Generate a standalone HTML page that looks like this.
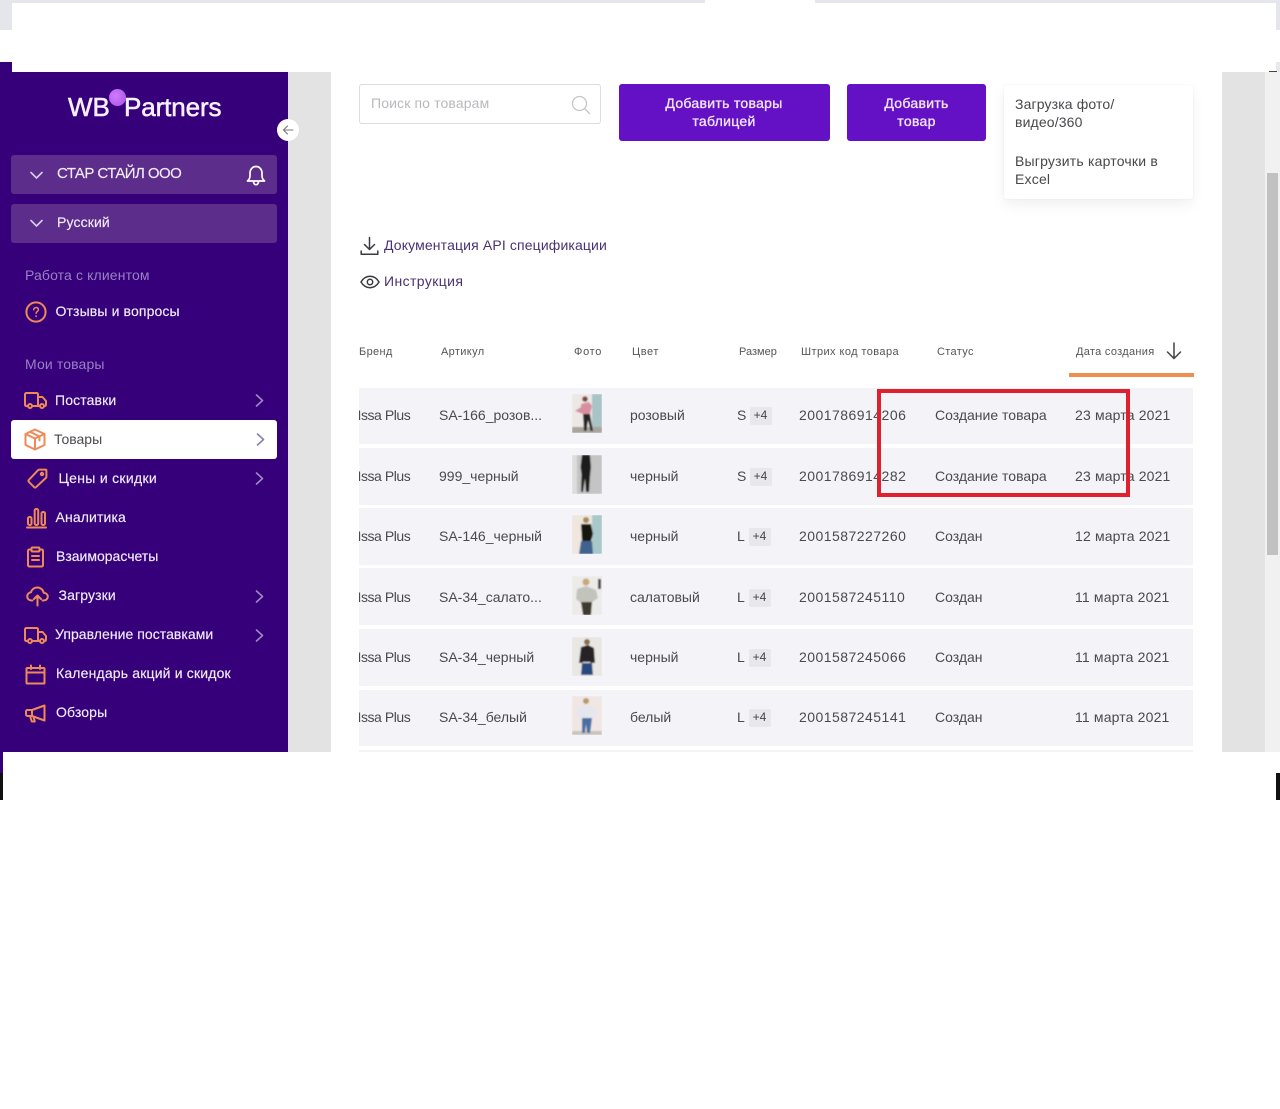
<!DOCTYPE html>
<html lang="ru"><head><meta charset="utf-8"><title>WB Partners</title>
<style>
html,body{margin:0;padding:0;background:#fff}
body{position:relative;width:1280px;height:1109px;overflow:hidden;font-family:"Liberation Sans","DejaVu Sans",sans-serif;color:#444;filter:blur(.3px)}
.b{position:absolute}
.t{position:absolute;white-space:nowrap;line-height:20px;font-size:14px}
.m{color:#f1ecf8;font-size:14px;letter-spacing:.13px;transform:translateY(-1px);-webkit-text-stroke:.15px #f1ecf8}
.s{color:#9a80c4;font-size:14px;letter-spacing:.13px;transform:translateY(-1px)}
.h{font-size:11px;color:#555;letter-spacing:.35px}
.c{font-size:14px;color:#4a4a4e}
.i{letter-spacing:-.45px}
.n{letter-spacing:.47px}
.d{letter-spacing:.16px}
.row{position:absolute;left:359px;width:834px;background:#f3f3f8}
.bd{position:absolute;width:22px;height:18px;background:#e8e8ec;border-radius:2px;font-size:12px;line-height:17px;text-align:center;color:#444}
.ph{position:absolute;left:572px;width:30px;height:39px}
.ic{position:absolute;fill:none;stroke:#ee8a5a;stroke-width:2;stroke-linecap:round;stroke-linejoin:round}
.ch{position:absolute;fill:none;stroke:#9c8cc0;stroke-width:1.6;stroke-linecap:round;stroke-linejoin:round}
.btn{position:absolute;top:84px;height:57px;background:#6410c4;border-radius:3px;color:#f0e4fb;font-size:14px;line-height:18px;text-align:center;letter-spacing:.3px;-webkit-text-stroke:.35px #f0e4fb}
</style></head><body>

<!-- screen top strip -->
<div class="b" style="left:0;top:0;width:705px;height:3px;background:#e4e6ec"></div>
<div class="b" style="left:815px;top:0;width:465px;height:3px;background:#e4e6ec"></div>
<div class="b" style="left:0;top:3px;width:12px;height:27px;background:#e4e6ec"></div>
<div class="b" style="left:1276px;top:3px;width:4px;height:27px;background:#e4e6ec"></div>
<div class="b" style="left:0;top:62px;width:12px;height:10px;background:#35007a"></div>
<div class="b" style="left:1276px;top:62px;width:4px;height:10px;background:#e8e8ec"></div>

<!-- backgrounds -->
<div class="b" style="left:288px;top:72px;width:43px;height:680px;background:#e3e3e3"></div>
<div class="b" style="left:1222px;top:72px;width:43px;height:680px;background:#e3e3e3"></div>
<div class="b" style="left:1265px;top:72px;width:15px;height:680px;background:#f1f1f1"></div>
<div class="b" style="left:1267px;top:173px;width:11px;height:382px;background:#c1c1c1"></div>
<div class="b" style="left:1269px;top:71px;width:8px;height:1px;background:#444"></div>

<!-- sidebar -->
<div class="b" style="left:0;top:72px;width:288px;height:680px;background:#35007a"></div>
<div class="t" style="left:68px;top:92px;font-size:26px;line-height:30px;color:#f6f0fb;-webkit-text-stroke:.55px #f6f0fb">WB</div>
<div class="t" style="left:124px;top:92px;font-size:26px;line-height:30px;color:#f6f0fb;letter-spacing:-.1px;-webkit-text-stroke:.55px #f6f0fb">Partners</div>
<div class="b" style="left:109px;top:89px;width:17px;height:17px;border-radius:50%;background:radial-gradient(circle at 40% 40%,#cf7dfb,#a94fe8)"></div>
<div class="b" style="left:277px;top:119px;width:22px;height:22px;border-radius:50%;background:#fff"></div>
<svg class="b" style="left:282px;top:124px" width="12" height="12" viewBox="0 0 12 12" fill="none" stroke="#777" stroke-width="1.1" stroke-linecap="round" stroke-linejoin="round"><path d="M11 6H1.5M5.5 2 1.5 6l4 4"/></svg>

<div class="b" style="left:11px;top:155px;width:266px;height:39px;background:#5c2d8a;border-radius:3px"></div>
<div class="b" style="left:11px;top:204px;width:266px;height:38.5px;background:#5c2d8a;border-radius:3px"></div>
<svg class="b" style="left:30px;top:171px;fill:none;stroke:#d8cce8;stroke-width:1.6;stroke-linecap:round;stroke-linejoin:round" width="13" height="9" viewBox="0 0 13 9"><path d="M1 1.5 6.5 7 12 1.5"/></svg>
<svg class="b" style="left:30px;top:219px;fill:none;stroke:#d8cce8;stroke-width:1.6;stroke-linecap:round;stroke-linejoin:round" width="13" height="9" viewBox="0 0 13 9"><path d="M1 1.5 6.5 7 12 1.5"/></svg>
<div class="t m" style="left:57px;top:165px;font-size:15px;letter-spacing:-.55px">СТАР СТАЙЛ ООО</div>
<div class="t m" style="left:57px;top:213px">Русский</div>
<svg class="b" style="left:245px;top:164px;fill:none;stroke:#fff;stroke-width:1.7;stroke-linecap:round;stroke-linejoin:round" width="22" height="22" viewBox="0 0 22 22"><path d="M2.5 17c1.5-1.5 2.500-2.500 2.500-5.500V9c0-3.500 2.500-6.500 6-6.500S17 5.500 17 9v2.500c0 3 1 4 2.500 5.500z"/><path d="M8.500 18c.3 1.800 1.200 2.700 2.500 2.700s2.200-.9 2.500-2.700"/></svg>

<div class="t s" style="left:25px;top:266px">Работа с клиентом</div>
<svg class="ic" style="left:25px;top:301px" width="22" height="22" viewBox="0 0 22 22"><circle cx="11" cy="11" r="9.600"/><path d="M8.700 8.800c0-1.400 1-2.300 2.400-2.300s2.300.9 2.300 2.100c0 1.800-2.300 1.900-2.300 3.700" stroke-width="1.500"/><path d="M11.100 15.200v.1" stroke-width="1.800"/></svg>
<div class="t m" style="left:55.500px;top:302px">Отзывы и вопросы</div>

<div class="t s" style="left:25px;top:355px">Мои товары</div>

<svg class="ic" style="left:24px;top:392px" width="23" height="17" viewBox="0 0 23 17"><path d="M4 14H2.500C1.500 14 1 13.400 1 12.500V2.500C1 1.600 1.500 1 2.500 1h10c.9 0 1.500.6 1.500 1.500V14H8"/><path d="M14 5h4.500L22 9v3.500c0 1-.5 1.500-1.500 1.500H20M16 14h-2"/><circle cx="6" cy="14" r="2"/><circle cx="18" cy="14" r="2"/></svg>
<div class="t m" style="left:55px;top:391px">Поставки</div>
<svg class="ch" style="left:255px;top:394px" width="9" height="13" viewBox="0 0 9 13"><path d="M1.500 1 7.500 6.500 1.500 12"/></svg>

<div class="b" style="left:11px;top:420px;width:266px;height:39px;background:#fff;border-radius:3px"></div>
<svg class="ic" style="left:24px;top:428px" width="22" height="23" viewBox="0 0 22 23"><path d="M11 1.500 20.500 6v11L11 21.500 1.500 17V6z"/><path d="M1.500 6 11 10.500 20.500 6M11 10.500v11M6 3.800l9.500 4.600v4"/></svg>
<div class="t" style="left:54px;top:429px;font-size:14px;color:#4a4a4e">Товары</div>
<svg class="ch" style="left:256px;top:433px;stroke:#8a80a8" width="9" height="13" viewBox="0 0 9 13"><path d="M1.500 1 7.500 6.500 1.500 12"/></svg>

<svg class="ic" style="left:27px;top:468px" width="21" height="21" viewBox="0 0 21 21"><path d="M1.800 12 11 2.200c.4-.4.800-.6 1.400-.6h6c.6 0 1 .4 1 1v6c0 .6-.2 1-.6 1.400L9 19.200c-.5.500-1.300.5-1.800 0L1.800 13.800c-.5-.5-.5-1.300 0-1.800z"/><circle cx="15" cy="6" r="1.200"/></svg>
<div class="t m" style="left:58.500px;top:469px;letter-spacing:.3px">Цены и скидки</div>
<svg class="ch" style="left:255px;top:472px" width="9" height="13" viewBox="0 0 9 13"><path d="M1.500 1 7.500 6.500 1.500 12"/></svg>

<svg class="ic" style="left:26px;top:507px" width="21" height="22" viewBox="0 0 21 22"><rect x="2" y="10" width="3.500" height="8" rx="1.500"/><rect x="8.700" y="2" width="3.500" height="16" rx="1.500"/><rect x="15.500" y="5" width="3.500" height="13" rx="1.500"/><path d="M1 20.500h19"/></svg>
<div class="t m" style="left:55.500px;top:508px">Аналитика</div>

<svg class="ic" style="left:26px;top:546px" width="19" height="22" viewBox="0 0 19 22"><path d="M5.500 3.500H3.500c-1 0-1.500.6-1.500 1.500v14c0 1 .5 1.500 1.500 1.500h12c1 0 1.500-.5 1.500-1.500V5c0-.9-.5-1.500-1.500-1.500h-2"/><rect x="5.500" y="1.500" width="8" height="4" rx="1"/><path d="M6 10h7M6 14h7"/></svg>
<div class="t m" style="left:56px;top:547px;letter-spacing:0">Взаиморасчеты</div>

<svg class="ic" style="left:26px;top:586px" width="23" height="21" viewBox="0 0 23 21"><path d="M6.500 14.500H5.500C3 14.500 1.200 12.700 1.200 10.400 1.200 8.200 2.900 6.500 5 6.300 5.800 3.400 8.300 1.500 11.300 1.500c3.200 0 5.800 2.200 6.400 5.200 2.300.2 4.100 1.800 4.100 3.900 0 2.200-1.800 3.900-4.100 3.900H16.500"/><path d="M11.500 19.500V9.500M8 13l3.500-3.500L15 13"/></svg>
<div class="t m" style="left:58.500px;top:586px">Загрузки</div>
<svg class="ch" style="left:255px;top:590px" width="9" height="13" viewBox="0 0 9 13"><path d="M1.500 1 7.500 6.500 1.500 12"/></svg>

<svg class="ic" style="left:24px;top:627px" width="23" height="17" viewBox="0 0 23 17"><path d="M4 14H2.500C1.500 14 1 13.400 1 12.500V2.500C1 1.600 1.500 1 2.500 1h10c.9 0 1.500.6 1.500 1.500V14H8"/><path d="M14 5h4.500L22 9v3.500c0 1-.5 1.500-1.500 1.500H20M16 14h-2"/><circle cx="6" cy="14" r="2"/><circle cx="18" cy="14" r="2"/></svg>
<div class="t m" style="left:55px;top:625px;letter-spacing:.05px">Управление поставками</div>
<svg class="ch" style="left:255px;top:629px" width="9" height="13" viewBox="0 0 9 13"><path d="M1.500 1 7.500 6.500 1.500 12"/></svg>

<svg class="ic" style="left:25px;top:664px" width="21" height="21" viewBox="0 0 21 21"><rect x="1.500" y="4" width="18" height="15.500" rx=".8"/><path d="M1.500 8.500h18M6 1.500V5M15 1.500V5"/></svg>
<div class="t m" style="left:56px;top:664px;letter-spacing:.17px">Календарь акций и скидок</div>

<svg class="ic" style="left:25px;top:704px" width="22" height="19" viewBox="0 0 22 19"><path d="M19.500 1.500 7 6H2.500C1.700 6 1 6.700 1 7.500v3c0 .8.700 1.500 1.500 1.500H7l12.500 4.500z"/><path d="M7 6v6M5 12l1.800 5.500h3L8.500 13"/></svg>
<div class="t m" style="left:56px;top:703px">Обзоры</div>

<!-- toolbar -->
<div class="b" style="left:359px;top:84px;width:240px;height:37.500px;border:1px solid #dcdcdc;border-radius:3px;background:#fff"></div>
<div class="t" style="left:371px;top:93px;color:#b9b9bd;letter-spacing:.13px">Поиск по товарам</div>
<svg class="b" style="left:571px;top:95px;fill:none;stroke:#c6c6c8;stroke-width:1.300;stroke-linecap:round" width="20" height="20" viewBox="0 0 20 20"><circle cx="8.500" cy="8.500" r="7"/><path d="M13.500 13.500 18.500 18.500"/></svg>
<div class="btn" style="left:618.500px;width:211px"><div style="padding-top:10px">Добавить товары<br>таблицей</div></div>
<div class="btn" style="left:847px;width:139px"><div style="padding-top:10px">Добавить<br>товар</div></div>

<div class="b" style="left:1004px;top:85px;width:189px;height:114px;background:#fff;border-radius:3px;box-shadow:0 6px 14px rgba(0,0,0,.06),0 0 2px rgba(0,0,0,.06)"></div>
<div class="t" style="left:1015px;top:95px;line-height:18px;color:#48484c;letter-spacing:.14px">Загрузка фото/<br>видео/360</div>
<div class="t" style="left:1015px;top:152px;line-height:18px;color:#48484c;letter-spacing:.2px">Выгрузить карточки в<br>Excel</div>

<svg class="b" style="left:360px;top:236px;fill:none;stroke:#3b3b40;stroke-width:1.500;stroke-linecap:round;stroke-linejoin:round" width="19" height="20" viewBox="0 0 19 20"><path d="M9.500 1.500V13M4.500 8.500l5 5 5-5M1.200 15v3.200h16.600V15"/></svg>
<div class="t" style="left:384px;top:235px;color:#4a3172;letter-spacing:.14px">Документация API спецификации</div>
<svg class="b" style="left:360px;top:275px;fill:none;stroke:#3b3b40;stroke-width:1.500" width="20" height="14" viewBox="0 0 20 14"><path d="M1 7c2.200-3.600 5.400-5.700 9-5.700S16.800 3.400 19 7c-2.200 3.600-5.400 5.700-9 5.700S3.200 10.600 1 7z"/><circle cx="10" cy="7" r="2.700"/></svg>
<div class="t" style="left:384px;top:271px;color:#4a3172;letter-spacing:.4px">Инструкция</div>

<!-- table header -->
<div class="t h" style="left:359px;top:341.500px">Бренд</div>
<div class="t h" style="left:441px;top:341.500px">Артикул</div>
<div class="t h" style="left:574px;top:341.500px;letter-spacing:.7px">Фото</div>
<div class="t h" style="left:632px;top:341.500px;letter-spacing:.6px">Цвет</div>
<div class="t h" style="left:739px;top:341.500px;letter-spacing:0">Размер</div>
<div class="t h" style="left:801px;top:341.500px;letter-spacing:.42px">Штрих код товара</div>
<div class="t h" style="left:937px;top:341.500px">Статус</div>
<div class="t h" style="left:1076px;top:341.500px;letter-spacing:.3px">Дата создания</div>
<svg class="b" style="left:1165px;top:342px;fill:none;stroke:#444;stroke-width:1.500;stroke-linecap:round;stroke-linejoin:round" width="18" height="18" viewBox="0 0 18 18"><path d="M9 1v15.500M2.500 10 9 16.500 15.500 10"/></svg>
<div class="b" style="left:1069px;top:373px;width:125px;height:3.500px;background:#ee8f50"></div>

<!-- rows -->
<div class="row" style="top:388px;height:56px"></div>
<div class="row" style="top:448px;height:56.500px"></div>
<div class="row" style="top:508px;height:57px"></div>
<div class="row" style="top:568px;height:57px"></div>
<div class="row" style="top:629px;height:57px"></div>
<div class="row" style="top:690px;height:56px"></div>
<div class="row" style="top:750px;height:2px"></div>

<!-- row 1 -->
<div class="t c i" style="left:359px;top:405px;width:60px;overflow:hidden;text-indent:-1.500px">Issa Plus</div>
<div class="t c" style="left:439px;top:405px">SA-166_розов...</div>
<svg class="ph" style="top:394px" viewBox="0 0 30 39"><defs><filter id="f"><feGaussianBlur stdDeviation=".7"/></filter></defs><g filter="url(#f)"><rect width="30" height="39" fill="#ece8e6"/><rect x="20" width="10" height="36" fill="#a9c4c6"/><rect y="33" width="30" height="6" fill="#a9a49c"/><circle cx="13" cy="5" r="2.800" fill="#7a4a3a"/><path d="M9 10l8-2 3 4-2 8H11L3 17l6-4z" fill="#d98ea0"/><path d="M11 20h7l3 17h-2.500l-2.500-11-1.500 11h-2.500z" fill="#282428"/></g></svg>
<div class="t c" style="left:630px;top:405px">розовый</div>
<div class="t c" style="left:737px;top:405px">S</div><div class="bd" style="left:749.500px;top:407px">+4</div>
<div class="t c n" style="left:799px;top:405px">2001786914206</div>
<div class="t c" style="left:935px;top:405px">Создание товара</div>
<div class="t c d" style="left:1075px;top:405px">23 марта 2021</div>

<!-- row 2 -->
<div class="t c i" style="left:359px;top:466px;width:60px;overflow:hidden;text-indent:-1.500px">Issa Plus</div>
<div class="t c" style="left:439px;top:466px">999_черный</div>
<svg class="ph" style="top:455px" viewBox="0 0 30 39"><g filter="url(#f)"><rect width="30" height="39" fill="#c4c4c4"/><rect width="5" height="39" x="0" fill="#dcdcdc"/><path d="M10 0h8l1 12-1 10-1 15h-3l-1-14-2 14H9l.5-18-1-7z" fill="#1a1a1c"/></g></svg>
<div class="t c" style="left:630px;top:466px">черный</div>
<div class="t c" style="left:737px;top:466px">S</div><div class="bd" style="left:749.500px;top:467.500px">+4</div>
<div class="t c n" style="left:799px;top:466px">2001786914282</div>
<div class="t c" style="left:935px;top:466px">Создание товара</div>
<div class="t c d" style="left:1075px;top:466px">23 марта 2021</div>

<!-- row 3 -->
<div class="t c i" style="left:359px;top:526px;width:60px;overflow:hidden;text-indent:-1.500px">Issa Plus</div>
<div class="t c" style="left:439px;top:526px">SA-146_черный</div>
<svg class="ph" style="top:515px" viewBox="0 0 30 39"><g filter="url(#f)"><rect width="30" height="39" fill="#f0e6de"/><rect x="20" width="10" height="39" fill="#a9c8ca"/><circle cx="14" cy="5" r="3" fill="#a58a5a"/><path d="M9 9h10l2 10-2 7H10z" fill="#15120f"/><path d="M9 26h11l1 13H7z" fill="#3f628e"/></g></svg>
<div class="t c" style="left:630px;top:526px">черный</div>
<div class="t c" style="left:737px;top:526px">L</div><div class="bd" style="left:748.500px;top:528px">+4</div>
<div class="t c n" style="left:799px;top:526px">2001587227260</div>
<div class="t c" style="left:935px;top:526px">Создан</div>
<div class="t c d" style="left:1075px;top:526px">12 марта 2021</div>

<!-- row 4 -->
<div class="t c i" style="left:359px;top:587px;width:60px;overflow:hidden;text-indent:-1.500px">Issa Plus</div>
<div class="t c" style="left:439px;top:587px">SA-34_салато...</div>
<svg class="ph" style="top:576px" viewBox="0 0 30 39"><g filter="url(#f)"><rect width="30" height="39" fill="#ecebe9"/><rect x="26" y="3" width="3" height="10" fill="#444"/><circle cx="14" cy="6" r="3.500" fill="#c9a878"/><path d="M5 13l9-3 10 4 2 8-7 5H9l-5-4z" fill="#c2c4bc"/><path d="M9 26h11l-1 13h-8z" fill="#3e3a2e"/></g></svg>
<div class="t c" style="left:630px;top:587px">салатовый</div>
<div class="t c" style="left:737px;top:587px">L</div><div class="bd" style="left:748.500px;top:588.500px">+4</div>
<div class="t c n" style="left:799px;top:587px">2001587245110</div>
<div class="t c" style="left:935px;top:587px">Создан</div>
<div class="t c d" style="left:1075px;top:587px">11 марта 2021</div>

<!-- row 5 -->
<div class="t c i" style="left:359px;top:647px;width:60px;overflow:hidden;text-indent:-1.500px">Issa Plus</div>
<div class="t c" style="left:439px;top:647px">SA-34_черный</div>
<svg class="ph" style="top:637px" viewBox="0 0 30 39"><g filter="url(#f)"><rect width="30" height="39" fill="#e9e7e3"/><circle cx="15" cy="5" r="3" fill="#8a6a4a"/><path d="M9 10l7-2 6 3 1 15H19l-1-1H11l-1 1H7z" fill="#262028"/><path d="M10 26h10l1 12H9z" fill="#274a80"/></g></svg>
<div class="t c" style="left:630px;top:647px">черный</div>
<div class="t c" style="left:737px;top:647px">L</div><div class="bd" style="left:748.500px;top:649px">+4</div>
<div class="t c n" style="left:799px;top:647px">2001587245066</div>
<div class="t c" style="left:935px;top:647px">Создан</div>
<div class="t c d" style="left:1075px;top:647px">11 марта 2021</div>

<!-- row 6 -->
<div class="t c i" style="left:359px;top:707px;width:60px;overflow:hidden;text-indent:-1.500px">Issa Plus</div>
<div class="t c" style="left:439px;top:707px">SA-34_белый</div>
<svg class="ph" style="top:696px" viewBox="0 0 30 39"><g filter="url(#f)"><rect width="30" height="39" fill="#f0e6e4"/><rect y="35" width="30" height="4" fill="#c8c4be"/><circle cx="14" cy="5" r="3" fill="#b89a6a"/><path d="M6 12l9-3 8 3 2 8-4 3H9l-4-2z" fill="#e6e6ee"/><path d="M10 22h10l-1 8-1 7h-3l-1-9-1 9h-3z" fill="#4a6ea0"/></g></svg>
<div class="t c" style="left:630px;top:707px">белый</div>
<div class="t c" style="left:737px;top:707px">L</div><div class="bd" style="left:748.500px;top:709px">+4</div>
<div class="t c n" style="left:799px;top:707px">2001587245141</div>
<div class="t c" style="left:935px;top:707px">Создан</div>
<div class="t c d" style="left:1075px;top:707px">11 марта 2021</div>

<!-- red highlight -->
<div class="b" style="left:877px;top:389px;width:245px;height:100px;border:4px solid #e0202f"></div>

<!-- bottom -->
<div class="b" style="left:0;top:752px;width:3px;height:21px;background:#35007a"></div>
<div class="b" style="left:0;top:773px;width:3px;height:27px;background:#111"></div>
<div class="b" style="left:1276px;top:773px;width:4px;height:27px;background:#111"></div>
</body></html>
